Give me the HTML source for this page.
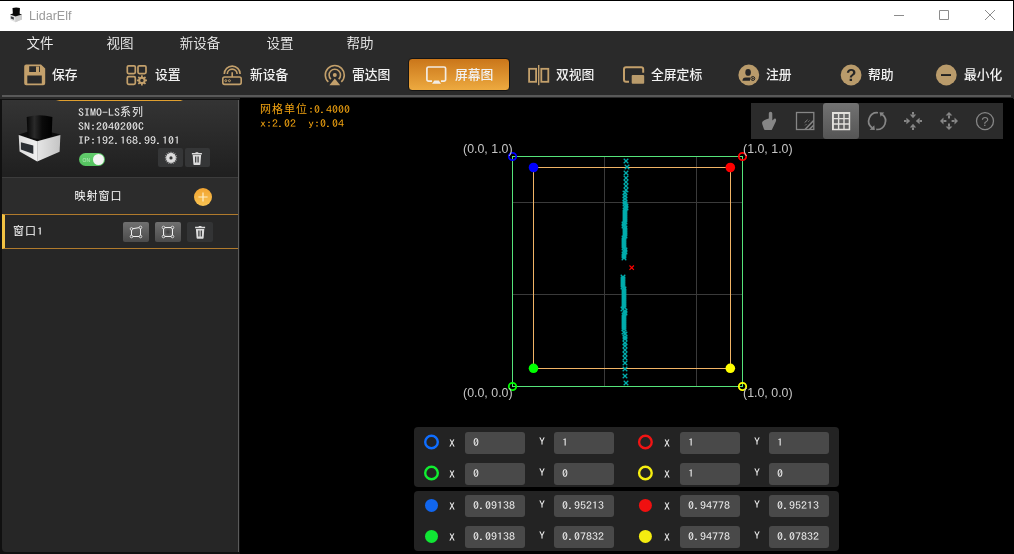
<!DOCTYPE html>
<html><head><meta charset="utf-8"><title>LidarElf</title>
<style>
*{box-sizing:border-box;margin:0;padding:0}
html,body{width:1014px;height:554px;overflow:hidden;background:#000}
body{position:relative;font-family:"Liberation Sans","Noto Sans CJK SC",sans-serif;color:#fff}
.abs,body>div,body>svg{position:absolute}
body>div{will-change:transform}
#title{left:0;top:1px;width:1013px;height:30px;background:#fff}
#title .t{position:absolute;left:29px;top:7px;font-size:12.5px;color:#9a9a9a;line-height:16px}
#bar{left:0;top:31px;width:1014px;height:68px;background:#2a2a2a}
.menu{top:34px;width:80px;height:20px;line-height:20px;text-align:center;font-size:13.5px;font-weight:350;color:#f0f0f0}
.tb{top:65px;height:20px;line-height:20px;font-size:12.8px;font-weight:500;color:#f2f2f2;white-space:nowrap}
#act{left:408px;top:58px;width:102px;height:33px;border:1px solid #151515;border-radius:4px;background:linear-gradient(#ca761a,#edaa40)}
#sep{left:2px;top:95px;width:1009px;height:2px;background:#595959}
#left{left:0;top:99px;width:240px;height:455px;background:#101010}
#leftin{position:absolute;left:2px;top:1px;width:237px;height:452px;background:#262626;border-radius:0 0 0 4px;border-right:1px solid #5a5a5a}
#card{position:absolute;left:0;top:0;width:236px;height:77px;background:linear-gradient(#343434,#1f1f1f)}
#oline{position:absolute;left:54px;top:0;width:127px;height:1px;background:linear-gradient(90deg,rgba(224,160,48,0),#e0a030 3%,#e0a030 98%,rgba(224,160,48,0))}
.mono{font-family:"IPAGothic","Liberation Mono",monospace;font-size:10px;letter-spacing:0;line-height:14px;white-space:pre}
.sq{display:inline-block;transform:scaleX(1.2);transform-origin:0 50%}
.cj{font-family:"Liberation Sans","Noto Sans CJK SC","WenQuanYi Zen Hei",sans-serif;font-size:11px;letter-spacing:1px}
.dev{position:absolute;left:76px;color:#f0f0f0}
.sbtn{position:absolute;top:48.3px;width:25px;height:19px;background:#353637;border-radius:2px}
#hdr{position:absolute;left:0;top:77px;width:236px;height:38px;background:#2c2c2c;border-top:1px solid #3c3c3c}
#hdr .t{position:absolute;left:72.5px;top:10.5px;line-height:14px;color:#fff}
#plus{position:absolute;left:192px;top:10px;width:18px;height:18px;border-radius:9px;background:linear-gradient(#f2a431,#f8c352)}
#row{position:absolute;left:0;top:114px;width:236px;height:35px;background:#272727;border-top:1px solid #b07a2c;border-bottom:1px solid #b07a2c;border-left:3px solid #f2c243}
#row .t{position:absolute;left:8px;top:8.5px;line-height:14px;color:#fff}
.rbtn{position:absolute;top:7px;width:26px;height:20px;border-radius:2px;background:linear-gradient(#707070,#4b4b4b)}
#canvas{left:240px;top:98px;width:773px;height:456px;background:#000}
#info{left:260px;top:102px;color:#f2a310}
#ctb{left:751px;top:103px;width:252px;height:36px;background:#2b2b2b}
#ctbact{left:823px;top:103px;width:36px;height:36px;border-radius:3px;background:linear-gradient(#727272,#555)}
.lbl{font-size:12.4px;line-height:14px;color:#c6c6c6;white-space:nowrap}
.pan{left:414px;width:425px;height:60px;background:#232323;border-radius:4px}
.inp{height:22px;width:60px;background:#494949;border-radius:3px;line-height:22px;color:#f0f0f0;padding-left:8px}
.xy{line-height:14px;color:#f0f0f0}
</style></head><body>
<div id="title"><div class="t">LidarElf</div></div>
<svg style="left:9px;top:7px" width="14" height="16" viewBox="9 7 14 16"><path d="M10 14.6L15.4 16.4L22 14.4V19.6L15.4 22.2L10.2 19.8Z" fill="#e2e2e2"/><path d="M15.4 16.4L22 14.4V19.6L15.4 22.2Z" fill="#cdcdcd"/><path d="M10 14.6L15.8 12.6L22 14.4L15.4 16.6Z" fill="#111"/><path d="M12.5 8.1Q16.2 6.9 19.9 8.1L19.6 14.6Q16.2 16.2 12.9 14.6Z" fill="#080808"/><path d="M10.8 16.2L13.8 17.2V19.8L10.8 18.6Z" fill="#3a3d42"/></svg>
<svg style="left:890px;top:5px" width="110" height="20" viewBox="890 5 110 20" fill="none" stroke="#8c8c8c" stroke-width="1"><path d="M894 15.5h10M939.5 10.5h9v9h-9zM985 10l10 10m0-10l-10 10"/></svg>
<div id="bar"></div>
<div class="menu" style="left:0px">文件</div>
<div class="menu" style="left:80px">视图</div>
<div class="menu" style="left:160px">新设备</div>
<div class="menu" style="left:240px">设置</div>
<div class="menu" style="left:320px">帮助</div>
<div id="act"></div>
<div class="tb" style="left:52px">保存</div>
<div class="tb" style="left:154.5px">设置</div>
<div class="tb" style="left:249.5px">新设备</div>
<div class="tb" style="left:352px">雷达图</div>
<div class="tb" style="left:454.5px">屏幕图</div>
<div class="tb" style="left:556px">双视图</div>
<div class="tb" style="left:651px">全屏定标</div>
<div class="tb" style="left:766px">注册</div>
<div class="tb" style="left:868px">帮助</div>
<div class="tb" style="left:963.5px">最小化</div>
<svg style="left:0;top:58px" width="1014" height="36" viewBox="0 58 1014 36">
<path fill="#c3a06b" fill-rule="evenodd" d="M26.2 64.6H41L45.2 68.6V83.2a2 2 0 0 1-2 2H26.2a2 2 0 0 1-2-2V66.6a2 2 0 0 1 2-2zM29.2 66.3V72H40V66.3zM27.3 75.5V83.5H41.8V75.5z"/><rect x="36" y="66.5" width="3.1" height="5.5" fill="#c3a06b"/>
<g fill="none" stroke="#c3a06b" stroke-width="1.7"><rect x="127.3" y="65.8" width="8" height="7.8" rx="1.3"/><rect x="138" y="65.8" width="8" height="7.8" rx="1.3"/><rect x="127.3" y="76.6" width="8" height="7.8" rx="1.3"/></g>
<path fill="#c3a06b" fill-rule="evenodd" d="M145.60 79.51L146.94 79.60L146.94 81.20L145.60 81.29L145.14 82.39L146.03 83.40L144.90 84.53L143.89 83.64L142.79 84.10L142.70 85.44L141.10 85.44L141.01 84.10L139.91 83.64L138.90 84.53L137.77 83.40L138.66 82.39L138.20 81.29L136.86 81.20L136.86 79.60L138.20 79.51L138.66 78.41L137.77 77.40L138.90 76.27L139.91 77.16L141.01 76.70L141.10 75.36L142.70 75.36L142.79 76.70L143.89 77.16L144.90 76.27L146.03 77.40L145.14 78.41ZM140.20 80.40a1.70 1.70 0 1 0 3.40 0a1.70 1.70 0 1 0 -3.40 0Z"/>
<g fill="none" stroke="#c3a06b" stroke-width="1.6"><rect x="222.8" y="77" width="18.4" height="7.4" rx="1.8"/><path d="M232.2 77V72.2M224.3 74a7.9 7.9 0 0 1 15.8 0M227.3 74a4.9 4.9 0 0 1 9.8 0" /><circle cx="225.8" cy="80.7" r="1" stroke-width="1"/><circle cx="229.4" cy="80.7" r="1" stroke-width="1"/></g>
<g fill="none" stroke="#c3a06b" stroke-width="1.6"><path d="M328.32 81.95A9.50 9.50 0 1 1 341.28 81.95M330.91 79.17A5.70 5.70 0 1 1 338.69 79.17"/></g><circle cx="334.8" cy="75" r="2" fill="#c3a06b"/><path d="M334.8 78.6L340.2 85.2H329.4Z" fill="#c3a06b"/>
<g fill="none" stroke="#f2ece4" stroke-width="1.7"><path d="M432 81.2H428.5a1.6 1.6 0 0 1-1.6-1.6V68.6a1.6 1.6 0 0 1 1.6-1.6H444a1.6 1.6 0 0 1 1.6 1.6V79.6a1.6 1.6 0 0 1-1.6 1.6H441"/></g><path d="M434.4 80.6H438.8L441 83.8H432Z" fill="#f2ece4"/>
<g fill="none" stroke="#c3a06b" stroke-width="1.8"><rect x="529.1" y="68.8" width="7" height="13"/><rect x="541.3" y="68.8" width="7" height="13"/></g><rect x="538" y="65" width="1.4" height="20.2" fill="#c3a06b"/>
<path fill="none" stroke="#c3a06b" stroke-width="2" d="M629 81.8H626a2 2 0 0 1-2-2V69.2a2 2 0 0 1 2-2H641.2a2 2 0 0 1 2 2V72.8"/><rect x="631.7" y="75" width="12.5" height="8.8" rx="1" fill="#b99b6b"/>
<circle cx="748.8" cy="75" r="10.4" fill="#b99b6b"/><ellipse cx="748.1" cy="72.4" rx="2.8" ry="3.4" fill="#262626"/><path d="M742.4 80.8Q742.6 77.6 745.6 77.5H750V80.8Z" fill="#262626"/><circle cx="752.8" cy="78.5" r="2" fill="#b99b6b" stroke="#262626" stroke-width="1"/><path d="M752.1 77.3L754.2 78.5L752.1 79.7Z" fill="#262626"/>
<circle cx="851.1" cy="75" r="10.4" fill="#b99b6b"/><text x="851.1" y="81.3" text-anchor="middle" font-family="Liberation Sans,sans-serif" font-weight="bold" font-size="17" fill="#262626">?</text>
<circle cx="946.3" cy="75" r="10.4" fill="#b99b6b"/><rect x="941" y="74.1" width="10" height="1.9" fill="#222"/>
</svg>
<div id="sep"></div>
<div id="left"><div id="leftin"><div id="card"><div id="oline"></div>
<svg style="position:absolute;left:14px;top:13px" width="48" height="52" viewBox="16 113 48 52">
<defs><linearGradient id="lg1" x1="0" x2="1"><stop offset="0" stop-color="#dcdcdc"/><stop offset="1" stop-color="#f0f0f0"/></linearGradient><linearGradient id="lg2" x1="0" x2="1"><stop offset="0" stop-color="#e6e6e6"/><stop offset="1" stop-color="#c4c4c4"/></linearGradient><linearGradient id="lg3" x1="0" x2="1"><stop offset="0" stop-color="#050505"/><stop offset=".3" stop-color="#2a2a2a"/><stop offset=".6" stop-color="#0a0a0a"/><stop offset="1" stop-color="#000"/></linearGradient></defs>
<path d="M18.6 134.4L37 129L60.4 134.4L37.2 141.2Z" fill="#0c0c0c"/>
<path d="M18.7 134.9L37.2 141.2V161.6L19.6 151.6Z" fill="url(#lg1)"/>
<path d="M37.2 141.2L60.4 135L59.6 151.8L37.2 161.6Z" fill="url(#lg2)"/>
<path d="M26.7 117Q39.5 113.4 52.4 117L51.7 136Q39.5 142.4 27.5 136Z" fill="url(#lg3)"/>
<path d="M20.9 142.2L33.3 145.6V154L20.9 149.6Z" fill="#2b2f34"/>
</svg>
<div class="dev mono" style="top:4.6px"><span class="sq" style="margin-right:7px">SIMO-LS</span><span class="cj">系列</span></div>
<div class="dev mono" style="top:19px"><span class="sq" style="margin-right:11px">SN:2040200C</span></div>
<div class="dev mono" style="top:33px"><span class="sq" style="margin-right:17px">IP:192.168.99.101</span></div>
<div style="position:absolute;left:77px;top:52.6px;width:26.3px;height:13.6px;border-radius:7px;background:linear-gradient(#62cc6c,#54c35f)"><div style="position:absolute;left:14px;top:1.3px;width:11px;height:11px;border-radius:6px;background:#f4f4f4"></div><div style="position:absolute;left:3.5px;top:4.5px;font-size:5px;line-height:6px;color:#b8ecbc">ON</div></div>
<div class="sbtn" style="left:156px"></div><div class="sbtn" style="left:182.5px"></div>
<svg style="position:absolute;left:156px;top:48.3px" width="52" height="19" viewBox="158 148 52 19">
<path fill="#dcdcdc" fill-rule="evenodd" d="M175.78 157.43L177.09 157.54L177.09 158.26L175.78 158.37L175.59 159.29L176.76 159.90L176.49 160.56L175.23 160.16L174.71 160.95L175.56 161.95L175.05 162.46L174.05 161.61L173.26 162.13L173.66 163.39L173.00 163.66L172.39 162.49L171.47 162.68L171.36 163.99L170.64 163.99L170.53 162.68L169.61 162.49L169.00 163.66L168.34 163.39L168.74 162.13L167.95 161.61L166.95 162.46L166.44 161.95L167.29 160.95L166.77 160.16L165.51 160.56L165.24 159.90L166.41 159.29L166.22 158.37L164.91 158.26L164.91 157.54L166.22 157.43L166.41 156.51L165.24 155.90L165.51 155.24L166.77 155.64L167.29 154.85L166.44 153.85L166.95 153.34L167.95 154.19L168.74 153.67L168.34 152.41L169.00 152.14L169.61 153.31L170.53 153.12L170.64 151.81L171.36 151.81L171.47 153.12L172.39 153.31L173.00 152.14L173.66 152.41L173.26 153.67L174.05 154.19L175.05 153.34L175.56 153.85L174.71 154.85L175.23 155.64L176.49 155.24L176.76 155.90L175.59 156.51ZM169.40 157.90a1.60 1.60 0 1 0 3.20 0a1.60 1.60 0 1 0 -3.20 0Z"/>
<path fill="#dcdcdc" fill-rule="evenodd" d="M191.9 152.9h3.4l.4-.7h2.4l.4.7h3.4v1.5h-10zM192.7 155.0h8.4l-.7 9.2a.8.8 0 0 1-.8.7h-5.4a.8.8 0 0 1-.8-.7zM195.1 156.6v6h1.2v-6zM197.5 156.6v6h1.2v-6z"/>
</svg>
</div>
<div id="hdr"><div class="t cj">映射窗口</div><div id="plus"><svg width="18" height="18" viewBox="0 0 18 18" style="position:absolute;left:0;top:0"><path d="M9 4.4v9.2M4.4 9h9.2" stroke="#ffefc8" stroke-width="1.2"/></svg></div></div>
<div id="row"><div class="t mono"><span class="cj">窗口</span><span class="sq" style="margin-right:1px">1</span></div><div class="rbtn" style="left:118px"></div><div class="rbtn" style="left:150px"></div><div class="rbtn" style="left:182.3px;background:#333435;width:25.5px"></div>
<svg style="position:absolute;left:118px;top:7px" width="90" height="20" viewBox="123 222 90 20"><defs><radialGradient id="rg"><stop offset="0" stop-color="#3c3c3c"/><stop offset="1" stop-color="#6a6a6a"/></radialGradient></defs>
<g fill="none" stroke="#f0f0f0" stroke-width="1"><path d="M131.5 228.9L140.5 227.4V236.5H131.5Z"/><rect x="163.5" y="227.5" width="9" height="9" fill="url(#rg)"/></g>
<circle cx="131.5" cy="228.9" r="1.3" fill="#5a5a5a" stroke="#f0f0f0" stroke-width=".8"/>
<circle cx="140.5" cy="227.4" r="1.3" fill="#5a5a5a" stroke="#f0f0f0" stroke-width=".8"/>
<circle cx="140.5" cy="236.5" r="1.3" fill="#5a5a5a" stroke="#f0f0f0" stroke-width=".8"/>
<circle cx="131.5" cy="236.5" r="1.3" fill="#5a5a5a" stroke="#f0f0f0" stroke-width=".8"/>
<circle cx="163.5" cy="227.5" r="1.3" fill="#5a5a5a" stroke="#f0f0f0" stroke-width=".8"/>
<circle cx="172.5" cy="227.5" r="1.3" fill="#5a5a5a" stroke="#f0f0f0" stroke-width=".8"/>
<circle cx="172.5" cy="236.5" r="1.3" fill="#5a5a5a" stroke="#f0f0f0" stroke-width=".8"/>
<circle cx="163.5" cy="236.5" r="1.3" fill="#5a5a5a" stroke="#f0f0f0" stroke-width=".8"/>
<path fill="#dcdcdc" fill-rule="evenodd" d="M195.1 226.8h3.4l.4-.7h2.4l.4.7h3.4v1.5h-10zM195.9 228.9h8.4l-.7 9.2a.8.8 0 0 1-.8.7h-5.4a.8.8 0 0 1-.8-.7zM198.3 230.5v6h1.2v-6zM200.7 230.5v6h1.2v-6z"/>
</svg></div>
</div></div>
<div id="canvas"></div>
<div id="info" class="mono"><span class="cj">网格单位</span><span class="sq" style="margin-right:7px">:0.4000</span>
<span class="sq" style="margin-right:14px">x:2.02  y:0.04</span></div>
<div id="ctb"></div><div id="ctbact"></div>
<svg style="left:751px;top:103px" width="252" height="36" viewBox="751 103 252 36">
<path fill="#868686" d="M768.8 113.6a1.75 1.75 0 0 1 3.5 0V120.4L774.6 118.6Q775.6 118 776 119.2Q776.4 120.2 775.8 121.4L772 129.4Q771.7 130 771 130H765Q764.3 130 764 129.2L762.2 124Q761.8 122.6 762.6 121.6Q764 119.8 766.4 119.2L768.8 118.6Z"/>
<g fill="none" stroke="#868686"><rect x="796.5" y="112.5" width="17.3" height="17" stroke-width="1.3"/><path d="M805 129.6L813.6 120.6M809.3 129.6L813.6 125.2" stroke-width="1.5"/><path d="M804.6 122.6L807.6 119.8M805.2 125.4L806.4 124.2M808.4 121.6L809.4 120.6" stroke-width="1"/></g>
<path fill="#e2e0dc" fill-rule="evenodd" d="M832 112h18.2v18.2H832zM833.9 113.9h4v4h-4zM839.3 113.9h4v4h-4zM844.7 113.9h4v4h-4zM833.9 119.3h4v4h-4zM839.3 119.3h4v4h-4zM844.7 119.3h4v4h-4zM833.9 124.7h4v4h-4zM839.3 124.7h4v4h-4zM844.7 124.7h4v4h-4z"/>
<g fill="none" stroke="#868686" stroke-width="1.7"><path d="M877.98 112.75A8.4 8.4 0 0 0 871.93 127.72M876.22 129.45A8.4 8.4 0 0 0 882.27 114.48"/></g><path fill="#868686" d="M874.3 125.3L869.6 129.7L874.8 129.9ZM879.5 112.2L884.3 112.4L880.6 116.7Z"/>
<path fill="#868686" d="M915.8 121.0L919.6 124.2L919.6 117.8Z"/><path stroke="#868686" stroke-width="2" d="M922.0 121.0L919.6 121.0"/>
<path fill="#868686" d="M910.2 121.0L906.4 117.8L906.4 124.2Z"/><path stroke="#868686" stroke-width="2" d="M904.0 121.0L906.4 121.0"/>
<path fill="#868686" d="M913.0 123.8L909.8 127.6L916.2 127.6Z"/><path stroke="#868686" stroke-width="2" d="M913.0 130.0L913.0 127.6"/>
<path fill="#868686" d="M913.0 118.2L916.2 114.4L909.8 114.4Z"/><path stroke="#868686" stroke-width="2" d="M913.0 112.0L913.0 114.4"/>
<path fill="#868686" d="M958.0 121.0L954.5 124.4L954.5 117.6Z"/><path stroke="#868686" stroke-width="2" d="M951.6 121.0L954.5 121.0"/>
<path fill="#868686" d="M940.0 121.0L943.5 117.6L943.5 124.4Z"/><path stroke="#868686" stroke-width="2" d="M946.4 121.0L943.5 121.0"/>
<path fill="#868686" d="M949.0 130.0L945.6 126.5L952.4 126.5Z"/><path stroke="#868686" stroke-width="2" d="M949.0 123.6L949.0 126.5"/>
<path fill="#868686" d="M949.0 112.0L952.4 115.5L945.6 115.5Z"/><path stroke="#868686" stroke-width="2" d="M949.0 118.4L949.0 115.5"/>
<circle cx="985" cy="121.1" r="8.5" fill="none" stroke="#868686" stroke-width="1.3"/><text x="985" y="126.2" text-anchor="middle" font-family="Liberation Sans,sans-serif" font-size="13.5" fill="#868686">?</text>
</svg>
<svg style="left:440px;top:140px" width="380" height="270" viewBox="440 140 380 270">
<path stroke="#3a3a3a" stroke-width="1" fill="none" d="M604.5 157V386M696.5 157V386M513 202.5H742M513 294.5H742"/>
<rect x="533.5" y="167.5" width="197" height="201" fill="none" stroke="#f1b365" stroke-width="1"/>
<rect x="512.5" y="156.5" width="230" height="230" fill="none" stroke="#55e47a" stroke-width="1"/>
<path stroke="#00acac" stroke-width="1.25" fill="none" d="M623.7 158.7l4.6 4.6m0-4.6l-4.6 4.6M624.7 164.7l4.6 4.6m0-4.6l-4.6 4.6M623.7 170.7l4.6 4.6m0-4.6l-4.6 4.6M623.7 175.7l4.6 4.6m0-4.6l-4.6 4.6M623.7 179.7l4.6 4.6m0-4.6l-4.6 4.6M623.7 183.7l4.6 4.6m0-4.6l-4.6 4.6M623.7 187.7l4.6 4.6m0-4.6l-4.6 4.6M622.7 190.7l4.6 4.6m0-4.6l-4.6 4.6M622.7 193.7l4.6 4.6m0-4.6l-4.6 4.6M622.7 196.7l4.6 4.6m0-4.6l-4.6 4.6M622.7 199.7l4.6 4.6m0-4.6l-4.6 4.6M622.7 201.7l4.6 4.6m0-4.6l-4.6 4.6M623.7 203.7l4.6 4.6m0-4.6l-4.6 4.6M623.7 205.7l4.6 4.6m0-4.6l-4.6 4.6M622.7 207.7l4.6 4.6m0-4.6l-4.6 4.6M622.7 209.7l4.6 4.6m0-4.6l-4.6 4.6M622.7 211.7l4.6 4.6m0-4.6l-4.6 4.6M622.7 213.7l4.6 4.6m0-4.6l-4.6 4.6M622.7 215.7l4.6 4.6m0-4.6l-4.6 4.6M622.7 217.7l4.6 4.6m0-4.6l-4.6 4.6M622.7 219.7l4.6 4.6m0-4.6l-4.6 4.6M621.7 221.7l4.6 4.6m0-4.6l-4.6 4.6M621.7 223.7l4.6 4.6m0-4.6l-4.6 4.6M622.7 225.7l4.6 4.6m0-4.6l-4.6 4.6M622.7 227.7l4.6 4.6m0-4.6l-4.6 4.6M622.7 229.7l4.6 4.6m0-4.6l-4.6 4.6M622.7 231.7l4.6 4.6m0-4.6l-4.6 4.6M622.7 233.7l4.6 4.6m0-4.6l-4.6 4.6M621.7 235.7l4.6 4.6m0-4.6l-4.6 4.6M621.7 237.7l4.6 4.6m0-4.6l-4.6 4.6M621.7 239.7l4.6 4.6m0-4.6l-4.6 4.6M621.7 241.7l4.6 4.6m0-4.6l-4.6 4.6M621.7 243.7l4.6 4.6m0-4.6l-4.6 4.6M621.7 245.7l4.6 4.6m0-4.6l-4.6 4.6M622.7 247.7l4.6 4.6m0-4.6l-4.6 4.6M622.7 249.7l4.6 4.6m0-4.6l-4.6 4.6M621.7 251.7l4.6 4.6m0-4.6l-4.6 4.6M621.7 253.7l4.6 4.6m0-4.6l-4.6 4.6M621.7 255.7l4.6 4.6m0-4.6l-4.6 4.6M620.7 274.7l4.6 4.6m0-4.6l-4.6 4.6M620.7 276.7l4.6 4.6m0-4.6l-4.6 4.6M620.7 278.7l4.6 4.6m0-4.6l-4.6 4.6M620.7 280.7l4.6 4.6m0-4.6l-4.6 4.6M620.7 282.7l4.6 4.6m0-4.6l-4.6 4.6M620.7 284.7l4.6 4.6m0-4.6l-4.6 4.6M621.7 286.7l4.6 4.6m0-4.6l-4.6 4.6M621.7 288.7l4.6 4.6m0-4.6l-4.6 4.6M621.7 290.7l4.6 4.6m0-4.6l-4.6 4.6M621.7 292.7l4.6 4.6m0-4.6l-4.6 4.6M621.7 294.7l4.6 4.6m0-4.6l-4.6 4.6M621.7 296.7l4.6 4.6m0-4.6l-4.6 4.6M621.7 298.7l4.6 4.6m0-4.6l-4.6 4.6M621.7 300.7l4.6 4.6m0-4.6l-4.6 4.6M621.7 302.7l4.6 4.6m0-4.6l-4.6 4.6M621.7 304.7l4.6 4.6m0-4.6l-4.6 4.6M620.7 306.7l4.6 4.6m0-4.6l-4.6 4.6M622.7 308.7l4.6 4.6m0-4.6l-4.6 4.6M622.7 310.7l4.6 4.6m0-4.6l-4.6 4.6M621.7 312.7l4.6 4.6m0-4.6l-4.6 4.6M621.7 314.7l4.6 4.6m0-4.6l-4.6 4.6M621.7 316.7l4.6 4.6m0-4.6l-4.6 4.6M621.7 318.7l4.6 4.6m0-4.6l-4.6 4.6M621.7 320.7l4.6 4.6m0-4.6l-4.6 4.6M621.7 322.7l4.6 4.6m0-4.6l-4.6 4.6M621.7 324.7l4.6 4.6m0-4.6l-4.6 4.6M621.7 326.7l4.6 4.6m0-4.6l-4.6 4.6M621.7 329.7l4.6 4.6m0-4.6l-4.6 4.6M622.7 331.7l4.6 4.6m0-4.6l-4.6 4.6M622.7 334.7l4.6 4.6m0-4.6l-4.6 4.6M622.7 336.7l4.6 4.6m0-4.6l-4.6 4.6M622.7 340.7l4.6 4.6m0-4.6l-4.6 4.6M622.7 343.7l4.6 4.6m0-4.6l-4.6 4.6M622.7 347.7l4.6 4.6m0-4.6l-4.6 4.6M622.7 351.7l4.6 4.6m0-4.6l-4.6 4.6M622.7 355.7l4.6 4.6m0-4.6l-4.6 4.6M622.7 360.7l4.6 4.6m0-4.6l-4.6 4.6M622.7 366.7l4.6 4.6m0-4.6l-4.6 4.6M622.7 373.7l4.6 4.6m0-4.6l-4.6 4.6M623.7 380.7l4.6 4.6m0-4.6l-4.6 4.6"/>
<path stroke="#ff0000" stroke-width="1.2" fill="none" d="M629.5 265.5l4.4 4.4m0-4.4l-4.4 4.4"/>
<circle cx="512.5" cy="156.5" r="3.7" fill="none" stroke="#0000ff" stroke-width="1.8"/>
<circle cx="742.5" cy="156.5" r="3.7" fill="none" stroke="#ff0000" stroke-width="1.8"/>
<circle cx="512.5" cy="386.5" r="3.7" fill="none" stroke="#00ff00" stroke-width="1.8"/>
<circle cx="742.5" cy="386.5" r="3.7" fill="none" stroke="#ffff00" stroke-width="1.8"/>
<circle cx="533.5" cy="167.5" r="4.8" fill="#0000ff"/>
<circle cx="730.3" cy="167.5" r="4.8" fill="#ff0000"/>
<circle cx="533.5" cy="368.3" r="4.8" fill="#00ff00"/>
<circle cx="730.3" cy="368.3" r="4.8" fill="#ffff00"/>
</svg>
<div class="lbl" style="left:462.5px;top:142.3px">(0.0, 1.0)</div>
<div class="lbl" style="left:743px;top:142.3px">(1.0, 1.0)</div>
<div class="lbl" style="left:462.5px;top:386px">(0.0, 0.0)</div>
<div class="lbl" style="left:743px;top:386px">(1.0, 0.0)</div>
<div class="pan" style="top:427px"></div><div class="pan" style="top:490.5px"></div>
<svg style="left:414px;top:427px" width="425" height="124" viewBox="414 427 425 124">
<circle cx="431.5" cy="442" r="6.3" fill="none" stroke="#0f6eff" stroke-width="2.4"/>
<circle cx="645.4" cy="442" r="6.3" fill="none" stroke="#f01414" stroke-width="2.4"/>
<circle cx="431.5" cy="473" r="6.3" fill="none" stroke="#10ee30" stroke-width="2.4"/>
<circle cx="645.4" cy="473" r="6.3" fill="none" stroke="#f6ee10" stroke-width="2.4"/>
<circle cx="431.5" cy="505.4" r="6.5" fill="#1166ee"/>
<circle cx="645.4" cy="505.4" r="6.5" fill="#f01010"/>
<circle cx="431.5" cy="536.4" r="6.5" fill="#10e634"/>
<circle cx="645.4" cy="536.4" r="6.5" fill="#f4ec10"/>
</svg>
<div class="xy mono" style="left:449px;top:436px"><span class="sq" style="margin-right:1px">X</span></div>
<div class="inp mono" style="left:465px;top:432px;line-height:21px"><span class="sq" style="margin-right:1px">0</span></div>
<div class="xy mono" style="left:539px;top:433.8px"><span class="sq" style="margin-right:1px">Y</span></div>
<div class="inp mono" style="left:554px;top:432px;line-height:21px"><span class="sq" style="margin-right:1px">1</span></div>
<div class="xy mono" style="left:664px;top:436px"><span class="sq" style="margin-right:1px">X</span></div>
<div class="inp mono" style="left:680px;top:432px;line-height:21px"><span class="sq" style="margin-right:1px">1</span></div>
<div class="xy mono" style="left:754px;top:433.8px"><span class="sq" style="margin-right:1px">Y</span></div>
<div class="inp mono" style="left:769px;top:432px;line-height:21px"><span class="sq" style="margin-right:1px">1</span></div>
<div class="xy mono" style="left:449px;top:467px"><span class="sq" style="margin-right:1px">X</span></div>
<div class="inp mono" style="left:465px;top:463px;line-height:21px"><span class="sq" style="margin-right:1px">0</span></div>
<div class="xy mono" style="left:539px;top:464.8px"><span class="sq" style="margin-right:1px">Y</span></div>
<div class="inp mono" style="left:554px;top:463px;line-height:21px"><span class="sq" style="margin-right:1px">0</span></div>
<div class="xy mono" style="left:664px;top:467px"><span class="sq" style="margin-right:1px">X</span></div>
<div class="inp mono" style="left:680px;top:463px;line-height:21px"><span class="sq" style="margin-right:1px">1</span></div>
<div class="xy mono" style="left:754px;top:464.8px"><span class="sq" style="margin-right:1px">Y</span></div>
<div class="inp mono" style="left:769px;top:463px;line-height:21px"><span class="sq" style="margin-right:1px">0</span></div>
<div class="xy mono" style="left:449px;top:499px"><span class="sq" style="margin-right:1px">X</span></div>
<div class="inp mono" style="left:465px;top:495px;line-height:21px"><span class="sq" style="margin-right:7px">0.09138</span></div>
<div class="xy mono" style="left:539px;top:496.8px"><span class="sq" style="margin-right:1px">Y</span></div>
<div class="inp mono" style="left:554px;top:495px;line-height:21px"><span class="sq" style="margin-right:7px">0.95213</span></div>
<div class="xy mono" style="left:664px;top:499px"><span class="sq" style="margin-right:1px">X</span></div>
<div class="inp mono" style="left:680px;top:495px;line-height:21px"><span class="sq" style="margin-right:7px">0.94778</span></div>
<div class="xy mono" style="left:754px;top:496.8px"><span class="sq" style="margin-right:1px">Y</span></div>
<div class="inp mono" style="left:769px;top:495px;line-height:21px"><span class="sq" style="margin-right:7px">0.95213</span></div>
<div class="xy mono" style="left:449px;top:530px"><span class="sq" style="margin-right:1px">X</span></div>
<div class="inp mono" style="left:465px;top:526px;line-height:21px"><span class="sq" style="margin-right:7px">0.09138</span></div>
<div class="xy mono" style="left:539px;top:527.8px"><span class="sq" style="margin-right:1px">Y</span></div>
<div class="inp mono" style="left:554px;top:526px;line-height:21px"><span class="sq" style="margin-right:7px">0.07832</span></div>
<div class="xy mono" style="left:664px;top:530px"><span class="sq" style="margin-right:1px">X</span></div>
<div class="inp mono" style="left:680px;top:526px;line-height:21px"><span class="sq" style="margin-right:7px">0.94778</span></div>
<div class="xy mono" style="left:754px;top:527.8px"><span class="sq" style="margin-right:1px">Y</span></div>
<div class="inp mono" style="left:769px;top:526px;line-height:21px"><span class="sq" style="margin-right:7px">0.07832</span></div>
</body></html>
